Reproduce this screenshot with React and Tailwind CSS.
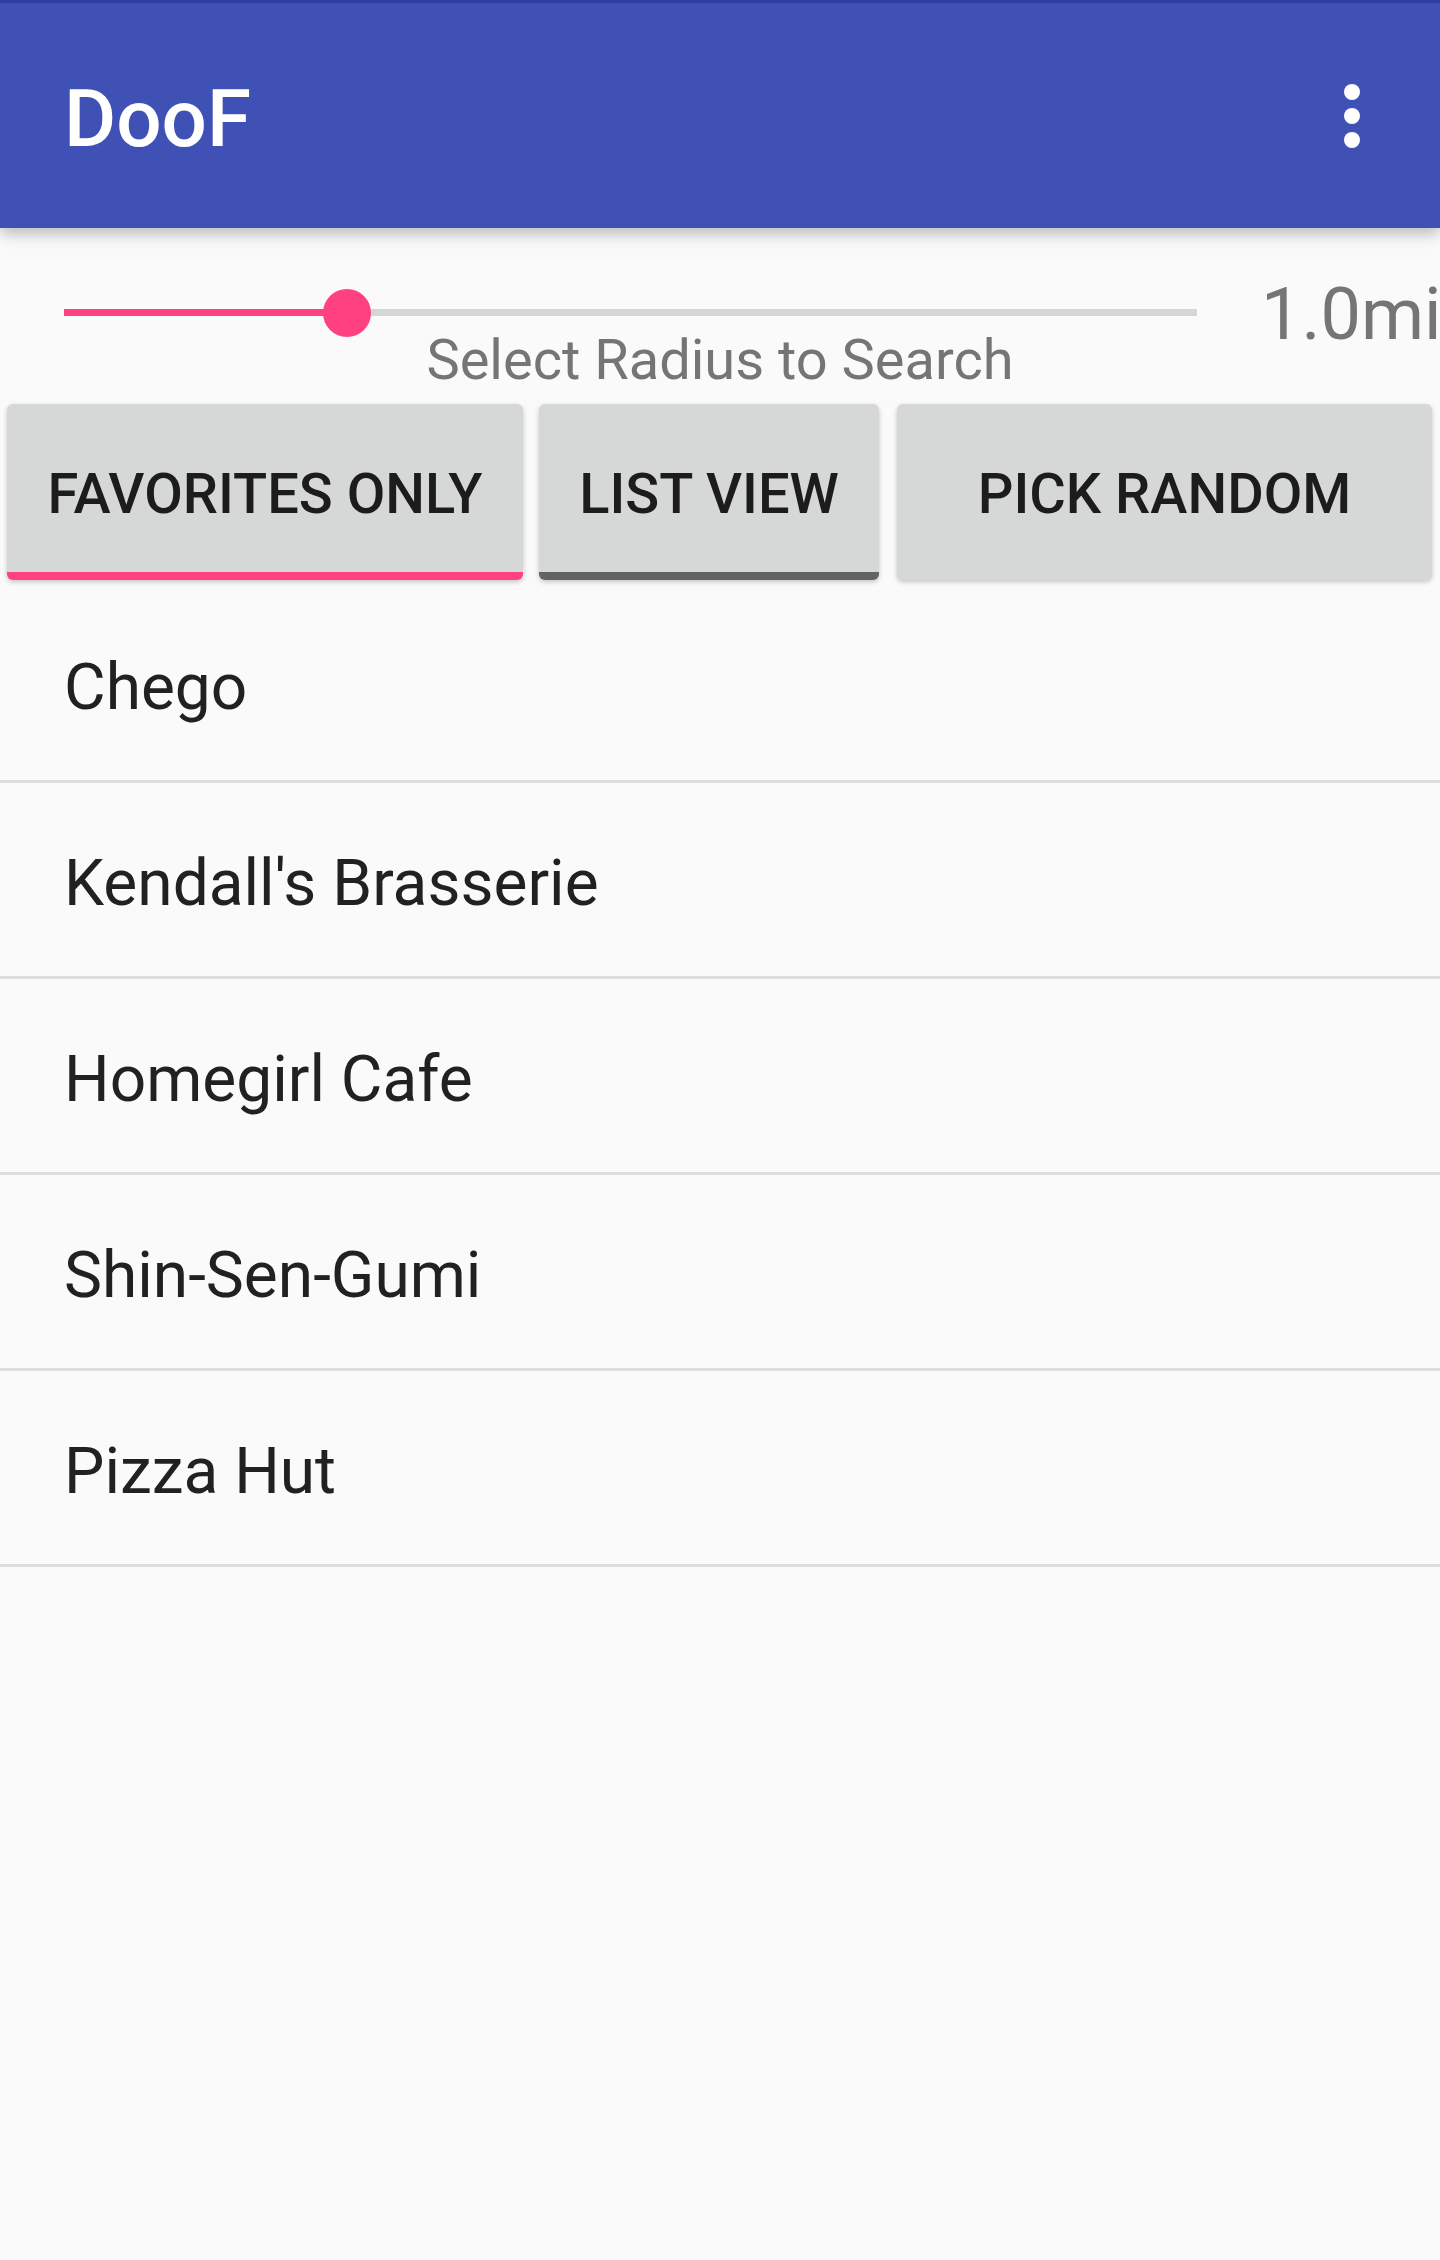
import React from "react";

const places = ["Chego", "Kendall's Brasserie", "Homegirl Cafe", "Shin-Sen-Gumi", "Pizza Hut"];

function Kebab() {
  return (
    <div className="ml-auto mr-[80px] flex flex-col gap-[8px]">
      <span className="block w-[16px] h-[16px] rounded-full bg-white" />
      <span className="block w-[16px] h-[16px] rounded-full bg-white" />
      <span className="block w-[16px] h-[16px] rounded-full bg-white" />
    </div>
  );
}

function ToggleButton({ label, width, indicator }) {
  return (
    <button
      className={`relative h-[176px] ${width} shrink-0 rounded-[6px] bg-[#d6d7d7] shadow-[0_2px_5px_rgba(0,0,0,0.22)] flex items-center justify-center pt-[4px] text-[56px] leading-none font-medium text-[#1c1c1c] whitespace-nowrap overflow-hidden`}
    >
      {label}
      {indicator && <span className={`absolute left-0 right-0 bottom-0 h-[8px] ${indicator}`} />}
    </button>
  );
}

export default function App() {
  return (
    <main className="w-[1440px] min-h-[2260px] bg-[#fafafa] font-['Roboto',sans-serif] overflow-hidden">
      {/* App bar */}
      <header className="relative z-10 h-[228px] border-t-[3px] border-[#2f3e9e] bg-[#3f51b5] flex items-center shadow-[0_6px_14px_rgba(0,0,0,0.25)]">
        <h1 className="pl-[64px] pt-[7px] text-[80px] leading-none font-medium text-white">DooF</h1>
        <Kebab />
      </header>

      {/* Radius slider */}
      <section className="pt-[64px]">
        <div className="flex items-center h-[40px] whitespace-nowrap">
          <div className="relative ml-[64px] w-[1133px] h-[7px] bg-[#d6d6d6] shrink-0">
            <div className="h-full w-[283px] bg-[#ff4081]" />
            <span className="absolute left-[259px] top-[-20px] w-[48px] h-[48px] rounded-full bg-[#ff4081]" />
          </div>
          <span className="ml-[64px] mt-[6px] text-[72px] leading-none text-[#757575]">1.0mi</span>
        </div>
        <p className="text-center text-[56px] leading-none text-[#757575]">Select Radius to Search</p>
      </section>

      {/* Toggle buttons */}
      <div className="mt-[16px] flex pl-[7px]">
        <ToggleButton label="FAVORITES ONLY" width="w-[516px]" indicator="bg-[#ff4081]" />
        <div className="w-[16px] shrink-0" />
        <ToggleButton label="LIST VIEW" width="w-[340px]" indicator="bg-[#636363]" />
        <div className="w-[18px] shrink-0" />
        <ToggleButton label="PICK RANDOM" width="w-[535px]" />
      </div>

      {/* Restaurant list */}
      <ul className="mt-[7px]">
        {places.map((p) => (
          <li
            key={p}
            className="h-[196px] border-b-[3px] border-[#dddddd] flex items-center pl-[64px] pt-[8px] text-[64px] leading-none text-[#212121]"
          >
            {p}
          </li>
        ))}
      </ul>
    </main>
  );
}
